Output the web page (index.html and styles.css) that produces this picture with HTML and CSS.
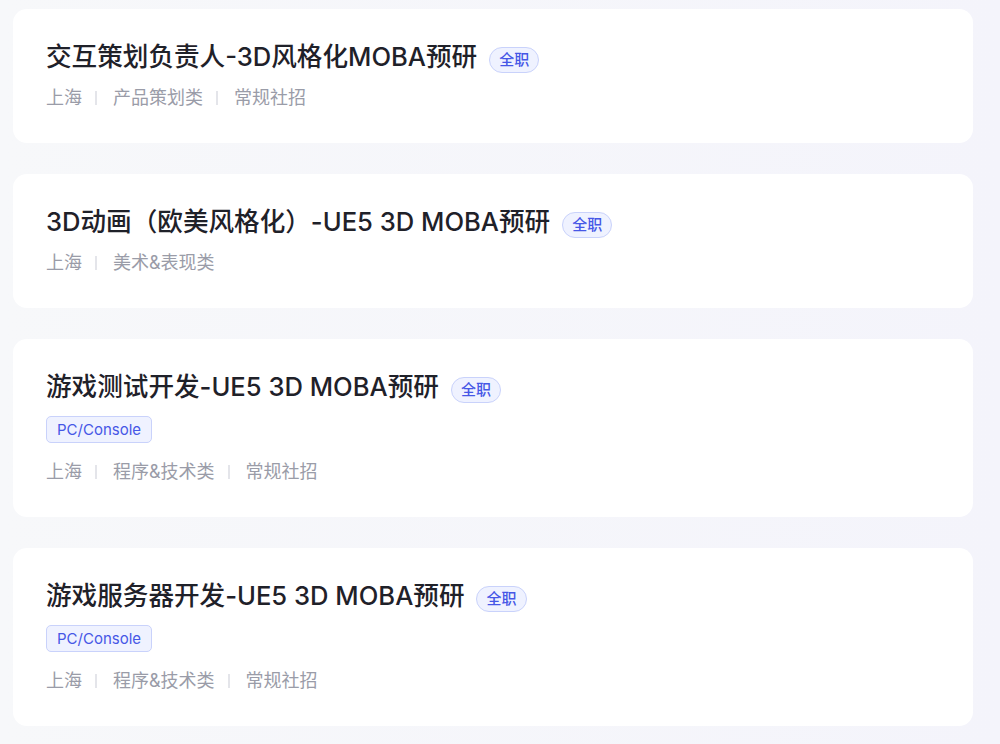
FILE: index.html
```html
<!DOCTYPE html>
<html lang="zh-CN">
<head>
<meta charset="utf-8">
<title>职位列表</title>
<link rel="stylesheet" href="styles.css">
<meta name="viewport" content="width=device-width, initial-scale=1.0">
</head>
<body>
<div class="list">
    <div class="job">
        <div class="head">
            <h3>交互策划负责人-3D风格化MOBA预研</h3>
            <span class="badge">全职</span>
        </div>
        <div class="meta">
            <span>上海</span><i></i><span>产品策划类</span><i></i><span>常规社招</span>
        </div>
    </div>
    <div class="job">
        <div class="head">
            <h3>3D动画（欧美风格化）-UE5 3D MOBA预研</h3>
            <span class="badge">全职</span>
        </div>
        <div class="meta">
            <span>上海</span><i></i><span>美术&amp;表现类</span>
        </div>
    </div>
    <div class="job">
        <div class="head">
            <h3>游戏测试开发-UE5 3D MOBA预研</h3>
            <span class="badge">全职</span>
        </div>
        <div class="tags"><span class="tag">PC/Console</span></div>
        <div class="meta">
            <span>上海</span><i></i><span>程序&amp;技术类</span><i></i><span>常规社招</span>
        </div>
    </div>
    <div class="job">
        <div class="head">
            <h3>游戏服务器开发-UE5 3D MOBA预研</h3>
            <span class="badge">全职</span>
        </div>
        <div class="tags"><span class="tag">PC/Console</span></div>
        <div class="meta">
            <span>上海</span><i></i><span>程序&amp;技术类</span><i></i><span>常规社招</span>
        </div>
    </div>
</div>
</body>
</html>
```

FILE: styles.css
```css
* {
    margin: 0;
    padding: 0;
    box-sizing: border-box;
    font-family: 'Inter', 'Noto Sans CJK SC', sans-serif;
}

body {
    min-height: 100vh;
    background: linear-gradient(to right, #f7f8fa, #f4f4fb);
}

.list {
    display: flex;
    flex-direction: column;
    gap: 31px;
    width: 960px;
    margin: 9px 0 0 13px;
}

.job {
    background: #ffffff;
    border-radius: 14px;
    padding: 31px 33px 33px;
}

.job .head {
    display: flex;
    align-items: center;
    gap: 12px;
}

.job h3 {
    font-size: 25.6px;
    line-height: 34px;
    font-weight: 500;
    color: #1f2129;
}

.badge {
    height: 26px;
    line-height: 24px;
    padding: 0 9px;
    margin-top: 6px;
    font-size: 15px;
    font-weight: 500;
    color: #4657e6;
    background: #eff2ff;
    border: 1px solid #c9d2fb;
    border-radius: 13px;
}

.tags {
    display: flex;
    margin-top: 12px;
}

.tag {
    height: 27px;
    line-height: 25px;
    padding: 0 10px;
    font-size: 15px;
    color: #4657e6;
    background: #eff2ff;
    border: 1px solid #c9d2fb;
    border-radius: 5px;
}

.meta {
    display: flex;
    align-items: center;
    margin-top: 12px;
    font-size: 18px;
    line-height: 24px;
    color: #9a9ca8;
}

.tags + .meta {
    margin-top: 17px;
}

.meta i {
    width: 2px;
    height: 14px;
    margin: 0 16px 0 13px;
    background: #e4e5ea;
}
```
